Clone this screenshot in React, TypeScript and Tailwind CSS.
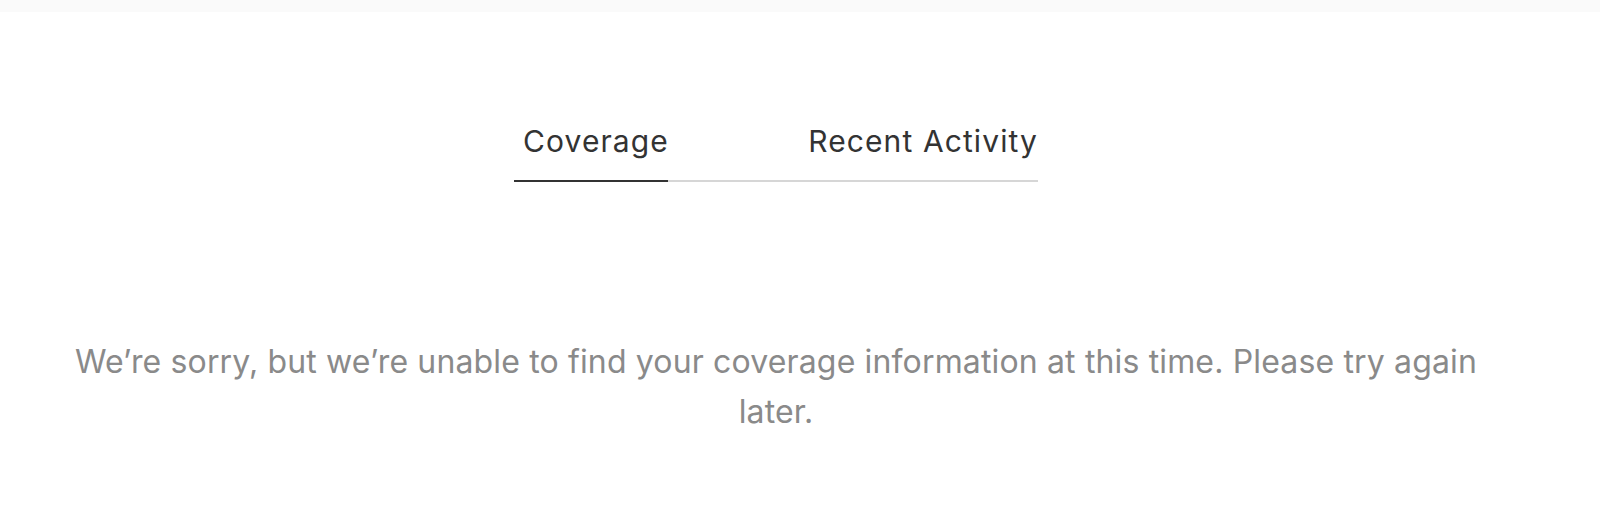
import React from 'react';

// ---------------------------------------------------------------------------
// Tabs
// ---------------------------------------------------------------------------

function Tabs() {
  return (
    <div className="flex w-[524px] border-b-2 border-[#d6d6d6]">
      <button
        type="button"
        className="-mb-[2px] w-[154px] border-b-2 border-[#333333] pb-[21px] pl-[9px] text-left text-[30px] leading-[36px] tracking-[1.1px] whitespace-nowrap text-[#333333]"
      >
        Coverage
      </button>
      <button
        type="button"
        className="ml-auto pb-[21px] text-right text-[30px] leading-[36px] tracking-[1.1px] whitespace-nowrap text-[#333333]"
      >
        Recent Activity
      </button>
    </div>
  );
}

// ---------------------------------------------------------------------------
// Page
// ---------------------------------------------------------------------------

export default function App() {
  return (
    <div
      className="h-[506px] w-[1600px] bg-white"
      style={{ fontFamily: 'Inter, "Noto Sans", sans-serif' }}
    >
      <div className="h-[12px] bg-[#fafafa]" />
      <div className="flex w-[1552px] flex-col items-center">
        <div className="mt-[111px]">
          <Tabs />
        </div>
        <p className="mt-[155px] w-[1420px] text-center text-[32px] leading-[50px] tracking-[0.15px] text-[#8a8a8a]">
          We’re sorry, but we’re unable to find your coverage information at this time. Please try again later.
        </p>
      </div>
    </div>
  );
}
